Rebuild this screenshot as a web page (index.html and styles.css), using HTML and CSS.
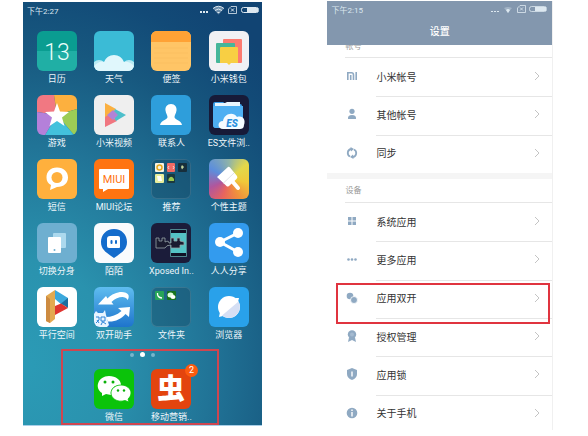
FILE: index.html
```html
<!DOCTYPE html>
<html lang="zh-CN">
<head>
  <meta charset="UTF-8">
  <meta name="viewport" content="width=device-width, initial-scale=1.0">
  <title>应用双开</title>
  <link rel="stylesheet" href="styles.css">
</head>
<body>
  <!-- 桌面 -->
  <main class="phone home">
    <div class="status">
      <span>下午2:27</span>
      <svg class="status-icons" width="64" height="12" viewBox="0 0 64 12">
        <g fill="currentColor">
          <rect x="3" y="7" width="2" height="2"/><rect x="6" y="7" width="2" height="2"/><rect x="9" y="7" width="2" height="2"/>
          <path d="M16 4.500Q21.500 0 27 4.500L21.500 10.500Z" opacity=".45"/>
        </g>
        <g fill="none" stroke="currentColor">
          <path d="M16 4.500Q21.500 0 27 4.500M18 6.500Q21.500 3.500 25 6.500M20.500 8.500H22.500"/>
          <path d="M34 2.500H39.500V9.500H31.500V5Z" opacity=".8"/><path d="M34 4.500L37 7.500M37 4.500L34 7.500"/>
          <rect x="44.500" y="3.500" width="17" height="5" rx="2"/>
        </g>
        <path d="M50 4H61V8H50Z" fill="currentColor"/>
      </svg>
    </div>

    <div class="apps">
      <a class="app" href="#">
        <svg class="icon" viewBox="0 0 40 40">
          <path fill="#0a9d91" d="M0 0H40V20H0Z"/><path fill="#20afa5" d="M0 20H40V40H0Z"/>
          <text x="20" y="29" class="day">13</text>
        </svg>
        <span>日历</span>
      </a>
      <a class="app" href="#">
        <svg class="icon" viewBox="0 0 40 40">
          <path fill="#3bbbd6" d="M0 0H40V40H0Z"/>
          <g fill="#b9ebf4"><circle cx="5" cy="36" r="7"/><circle cx="35" cy="36" r="7"/></g>
          <path fill="#e0f7fc" d="M0 35Q6 29 10 31Q13 24 20 24Q27 24 30 31Q35 30 40 35V40H0Z"/>
        </svg>
        <span>天气</span>
      </a>
      <a class="app" href="#">
        <svg class="icon" viewBox="0 0 40 40">
          <path fill="#ffc566" d="M0 0H40V40H0Z"/><path fill="#ffa235" d="M0 0H40V11H0Z"/>
          <path stroke="#f8bd60" stroke-width=".6" d="M3 17H37M3 22H37M3 27H37M3 32H37"/>
        </svg>
        <span>便签</span>
      </a>
      <a class="app" href="#">
        <svg class="icon" viewBox="0 0 40 40">
          <path fill="#f1f1f4" d="M0 0H40V40H0Z"/>
          <rect x="14" y="8" width="19" height="24" rx="1" fill="#fc7b70"/>
          <rect x="7" y="12" width="19" height="20" rx="1" fill="#45b69a"/>
          <path fill="#f8cf43" d="M11 17Q11 16 12 16H28Q29 16 29 17V32H22L20 34L18 32H11Z"/>
        </svg>
        <span>小米钱包</span>
      </a>

      <a class="app" href="#">
        <svg class="icon" viewBox="0 0 40 40">
          <path fill="#f17882" d="M0 0H17L20 20L0 17Z"/><path fill="#fcb03f" d="M17 0H40V14L20 20Z"/>
          <path fill="#9ccc55" d="M40 14V40H37L20 20Z"/><path fill="#43c1dc" d="M37 40H8L20 20Z"/>
          <path fill="#b480da" d="M8 40H0V17L20 20Z"/>
          <path fill="#fff" d="M20 8L23 16.500L32 17L25 22.500L27.500 31L20 26L12.500 31L15 22.500L8 17L17 16.500Z"/>
        </svg>
        <span>游戏</span>
      </a>
      <a class="app" href="#">
        <svg class="icon" viewBox="0 0 40 40">
          <path fill="#efefef" d="M0 0H40V40H0Z"/>
          <path fill="#fbb040" d="M11 8L22 14L16 20L11 24Z"/><path fill="#f07680" d="M11 22L16 19L23 26L11 32Z"/>
          <path fill="#4dbfcb" d="M21 14L32 20L22 26L18 20Z"/><path fill="#b283d6" d="M13 20L19 15L24 20L19 25Z"/>
        </svg>
        <span>小米视频</span>
      </a>
      <a class="app" href="#">
        <svg class="icon" viewBox="0 0 40 40">
          <path fill="#2e9edb" d="M0 0H40V40H0Z"/>
          <path fill="#fff" d="M20 9C24 9 26 12 25.500 15.500C25 19 23.500 20 23.500 22C23.500 25 30 25 31 30H9C10 25 16.500 25 16.500 22C16.500 20 15 19 14.500 15.500C14 12 16 9 20 9Z"/>
        </svg>
        <span>联系人</span>
      </a>
      <a class="app" href="#">
        <svg class="icon" viewBox="0 0 40 40">
          <path fill="#171a38" d="M0 0H40V40H0Z"/>
          <path fill="#3d9fe8" d="M4 9Q4 7 6 7H14L17 9H31Q33 9 33 11V33H7Q4 33 4 30Z"/>
          <path fill="#e9f6ff" d="M6 8H16L18 7H31V11H6Z"/><path fill="#4eaff2" d="M4 11H34V31Q34 33 32 33H7Q4 33 4 30Z"/>
          <path fill="#f5fbff" d="M14 34C8 34 8 26 14 26C15 19 24 16 28 22C34 20 37 25 35 30C35 33 33 34 31 34Z"/>
          <text x="23" y="32" class="es">ES</text>
        </svg>
        <span>ES文件浏..</span>
      </a>

      <a class="app" href="#">
        <svg class="icon" viewBox="0 0 40 40">
          <path fill="#ffb03d" d="M0 0H40V40H0Z"/>
          <path fill="#fff" d="M20 8.500C27 8.500 31 13 31 18.500C31 24 27 28 20 28L13 31L14 26C11 24.500 9.500 22 9.500 18.500C9.500 13 13 8.500 20 8.500Z"/>
          <circle cx="20" cy="18.500" r="5.500" fill="#ffb03d"/>
        </svg>
        <span>短信</span>
      </a>
      <a class="app" href="#">
        <svg class="icon" viewBox="0 0 40 40">
          <path fill="#ff7411" d="M0 0H40V40H0Z"/>
          <path fill="#fff" d="M6 10H34Q35 10 35 11V29Q35 30 34 30H14L9 33V30H6Q5 30 5 29V11Q5 10 6 10Z"/>
          <text x="20" y="24" class="miui">MIUI</text>
        </svg>
        <span>MIUI论坛</span>
      </a>
      <a class="app" href="#">
        <svg class="icon folder" viewBox="0 0 40 40">
          <rect x="4" y="4" width="9" height="9" rx="1" fill="#f8f3e4"/><circle cx="8.500" cy="8.500" r="2.500" fill="none" stroke="#e5a820" stroke-width="1.500"/>
          <rect x="16" y="4" width="8" height="9" rx="1" fill="#f26a64"/><path d="M18 7L17 8.500L18 10M22 7L23 8.500L22 10" fill="none" stroke="#fff" stroke-width=".7"/>
          <rect x="27" y="4" width="9" height="9" rx="1" fill="#172e3b"/><path fill="#c2d6a0" d="M31 6L33 8L31 10.500L30 8Z"/>
          <rect x="4" y="15" width="9" height="9" rx="1" fill="#e9ee9d"/><path fill="#fff" d="M6 17H10L11 22H7Z"/>
          <rect x="16" y="15" width="8" height="9" rx="1" fill="#1b393f"/><path fill="#9bc94e" d="M17.500 20Q20 15.500 23 20V22H17.500Z"/>
        </svg>
        <span>推荐</span>
      </a>
      <a class="app" href="#">
        <svg class="icon theme" viewBox="0 0 40 40">
          <path fill="#fff" d="M8 18L19 8Q20 7.500 21 8.500L28 17Q29 18.500 27.500 20L20 27Q18.500 28 17.500 27Z"/>
          <path stroke="#fff" stroke-width="4" stroke-linecap="round" d="M23 22L29 29"/>
          <path stroke="#d4d5dd" stroke-width=".7" d="M14 24.500L25 14"/>
        </svg>
        <span>个性主题</span>
      </a>

      <a class="app" href="#">
        <svg class="icon" viewBox="0 0 40 40">
          <path fill="#6eafd0" d="M0 0H40V40H0Z"/>
          <rect x="16" y="10" width="13" height="15" rx="1" fill="#acd9ee"/>
          <rect x="11" y="14" width="13" height="16" rx="1" fill="#fff"/><circle cx="17.500" cy="27" r="1" fill="#6eafd0"/>
        </svg>
        <span>切换分身</span>
      </a>
      <a class="app" href="#">
        <svg class="icon" viewBox="0 0 40 40">
          <path fill="#f9fbfd" d="M0 0H40V40H0Z"/>
          <path fill="#146ccc" d="M20 6C28 6 33 12 33 19C33 27 27 30 20 35C13 30 7 27 7 19C7 12 12 6 20 6Z"/>
          <path fill="#fff" d="M16 13H24Q26 13 26 15V24Q26 25 25 25H15Q13 25 13 23V16Q13 13 16 13Z"/>
          <path stroke="#146ccc" stroke-width="2" stroke-linecap="round" d="M17.500 18V20M22 18V20"/>
        </svg>
        <span>陌陌</span>
      </a>
      <a class="app" href="#">
        <svg class="icon" viewBox="0 0 40 40">
          <path fill="#1b1c3a" d="M0 0H40V40H0Z"/>
          <path fill="#101125" stroke="#5ea4a8" stroke-width=".8" d="M19.500 6.500H35.500V33.500H19.500Z"/><path fill="#54c3c6" d="M20 10H35V30H20Z"/>
          <path fill="#1a1b30" stroke="#97a5a7" stroke-width=".8" d="M5 15H8V18H11V15H14V19Q18 17 18 20H20V15H23V18H26V15H29V18L33 19V22L29 22V25H20V22Q15 22 14 25H5Z"/>
        </svg>
        <span>Xposed In..</span>
      </a>
      <a class="app" href="#">
        <svg class="icon" viewBox="0 0 40 40">
          <path fill="#339bee" d="M0 0H40V40H0Z"/>
          <path fill="none" stroke="#fff" stroke-width="3" d="M29 10L11 19L29 29"/>
          <g fill="#fff"><circle cx="29" cy="10" r="5"/><circle cx="11" cy="19" r="5"/><circle cx="29" cy="29" r="5"/></g>
        </svg>
        <span>人人分享</span>
      </a>

      <a class="app" href="#">
        <svg class="icon" viewBox="0 0 40 40">
          <path fill="#fff" d="M0 0H40V40H0Z"/>
          <path fill="#3ba8dc" d="M18 3L31 11V15L25 18L18 12Z"/><path fill="#1d6e9f" d="M31 11V21L24 16.500Z"/>
          <path fill="#df3430" d="M18 19L24 16.500L31 21L18 28Z"/>
          <path fill="#e3a950" d="M9 9L18 3V32L13 36L9 34Z"/><path fill="#cd8b41" d="M9 9L13 12V36L9 34Z"/>
        </svg>
        <span>平行空间</span>
      </a>
      <a class="app" href="#">
        <svg class="icon assist" viewBox="0 0 40 40">
          <path fill="#fff" d="M4 17.500L12 9L13.500 11.500C20 4 32 3 34.500 8C35 10 34.500 12 33.500 13C31 8 23 10 17.500 15L19.500 17.500Z"/>
          <path fill="#fff" d="M36 20L24 21L27.500 24C23 28 17 30 12 30L14 34.500C21 35 27 32 31.500 27L35 30Z"/>
          <path fill="#e8f5ff" d="M0 27L2 24L4 26H9L11 23L12 28L15 38L13 40H0Z"/>
          <path fill="none" stroke="#2c83d8" d="M2 30H5V33L2 36M5 36L3 33M7 30H11V34H7ZM9 34L7 38M9 35L12 37"/>
        </svg>
        <span>双开助手</span>
      </a>
      <a class="app" href="#">
        <svg class="icon folder" viewBox="0 0 40 40">
          <rect x="4" y="4" width="9" height="9" rx="1" fill="#27a458"/><path fill="none" stroke="#fff" stroke-width="1.300" d="M6.500 6Q6 10.500 11 11"/>
          <rect x="16" y="4" width="9" height="9" rx="1" fill="#18731e"/><ellipse cx="19.500" cy="8" rx="3" ry="2.500" fill="#e0ffd9"/><ellipse cx="22" cy="10" rx="2.500" ry="2" fill="#fff"/>
        </svg>
        <span>文件夹</span>
      </a>
      <a class="app" href="#">
        <svg class="icon" viewBox="0 0 40 40">
          <path fill="#29a1ea" d="M0 0H40V40H0Z"/>
          <circle cx="20" cy="20" r="11" fill="#fff"/><path fill="#fff" d="M26 11L30 11L29 15ZM14 29L10 30L11 25Z"/>
          <path fill="#d5dff4" d="M29.500 14.500A11 11 0 0 1 13 28.500Z"/>
        </svg>
        <span>浏览器</span>
      </a>
    </div>

    <div class="dots"><i></i><i class="on"></i><i></i></div>

    <div class="dock">
      <a class="app" href="#">
        <svg class="icon" viewBox="0 0 40 40">
          <path fill="#0bc30a" d="M0 0H40V40H0Z"/>
          <path fill="#fff" d="M15 7C22 7 27 11 27 16C20 16 16 20 17 26L12 25L8 27V24C0 19 4 7 15 7Z"/>
          <path fill="#fff" d="M27 16C33 16 37 20 37 24C37 27 35 29 34 30L35 33L31 31.500C23 34 17 29 17 24C17 20 21 16 27 16Z" stroke="#0bc30a" stroke-width=".8"/>
          <g fill="#0bb00a"><circle cx="11" cy="13" r="1.500"/><circle cx="19" cy="13" r="1.500"/><circle cx="24" cy="21.500" r="1.200"/><circle cx="30" cy="21.500" r="1.200"/></g>
        </svg>
        <span>微信</span>
      </a>
      <a class="app" href="#">
        <svg class="icon" viewBox="0 0 40 40">
          <path fill="#e3440e" d="M0 0H40V40H0Z"/>
          <text x="20" y="30" class="bug">虫</text>
        </svg>
        <b class="badge">2</b>
        <span>移动营销..</span>
      </a>
    </div>
    <div class="mark dock-mark"></div>
  </main>

  <!-- 设置 -->
  <section class="phone settings">
    <header>
      <div class="status">
        <span>下午2:15</span>
        <svg class="status-icons" width="64" height="12" viewBox="0 0 64 12">
          <g fill="currentColor">
            <rect x="4" y="8" width="2" height="1"/><rect x="7" y="8" width="2" height="1"/><rect x="10" y="8" width="2" height="1"/>
            <path d="M17 5Q21 3 25 5L21 10Z" opacity=".35"/><path d="M19 7Q21 5 23 7L21 10Z"/>
          </g>
          <g fill="none" stroke="currentColor" stroke-width=".8">
            <path d="M33 2.500H38.500V9.500H30.500V5Z"/><path d="M33 4.500L36 7.500M36 4.500L33 7.500"/>
            <rect x="42.500" y="3.500" width="17" height="5" rx="2"/>
          </g>
          <path d="M48 4H59V8H48Z" fill="currentColor"/>
        </svg>
      </div>
      <h1>设置</h1>
    </header>

    <h2 class="cut">帐号</h2>
    <ul class="account">
      <li><a href="#">
        <svg class="glyph" viewBox="0 0 12 12"><path fill="none" stroke="currentColor" stroke-width="1.600" d="M1.800 10V2.800H5.500Q7.500 2.800 7.500 5V10M4.700 5V10M10.200 2V10"/></svg>
        <span>小米帐号</span><svg class="arrow" viewBox="0 0 6 10"><path d="M1 1L5 5L1 9"/></svg></a></li>
      <li><a href="#">
        <svg class="glyph" viewBox="0 0 12 12"><circle cx="6" cy="3.300" r="2.600"/><path d="M2 11Q1.500 7 6 7Q10.500 7 10 11Z"/></svg>
        <span>其他帐号</span><svg class="arrow" viewBox="0 0 6 10"><path d="M1 1L5 5L1 9"/></svg></a></li>
      <li><a href="#">
        <svg class="glyph" viewBox="0 0 12 12"><path fill="none" stroke="currentColor" stroke-width="1.800" d="M4 9.500A4 4 0 0 1 5 2M8 2.500A4 4 0 0 1 7 10"/><path d="M4.500 0L8 2L5 4.500ZM7.500 12L4 10L7 7.500Z"/></svg>
        <span>同步</span><svg class="arrow" viewBox="0 0 6 10"><path d="M1 1L5 5L1 9"/></svg></a></li>
    </ul>

    <h2 class="group">设备</h2>
    <ul class="device">
      <li><a href="#">
        <svg class="glyph" viewBox="0 0 12 12"><path d="M2 2H5.500V5.500H2ZM6.500 2H10V5.500H6.500ZM2 6.500H5.500V10H2ZM6.500 6.500H10V10H6.500Z"/></svg>
        <span>系统应用</span><svg class="arrow" viewBox="0 0 6 10"><path d="M1 1L5 5L1 9"/></svg></a></li>
      <li><a href="#">
        <svg class="glyph" viewBox="0 0 12 12"><circle cx="2.500" cy="6.500" r="1.300"/><circle cx="6" cy="6.500" r="1.300"/><circle cx="9.500" cy="6.500" r="1.300"/></svg>
        <span>更多应用</span><svg class="arrow" viewBox="0 0 6 10"><path d="M1 1L5 5L1 9"/></svg></a></li>
      <li class="current"><a href="#">
        <svg class="glyph" viewBox="0 0 12 12"><circle cx="4" cy="4" r="3.300"/><circle cx="8" cy="8" r="3.500" stroke="#fff" stroke-width=".8"/></svg>
        <span>应用双开</span><svg class="arrow" viewBox="0 0 6 10"><path d="M1 1L5 5L1 9"/></svg></a>
        <div class="mark"></div></li>
      <li><a href="#">
        <svg class="glyph" viewBox="0 0 12 12"><circle cx="6" cy="4.500" r="4.200"/><circle cx="6" cy="4.500" r="2" fill="#a4bad0"/><path d="M3 7.500L2 12L6 10L10 12L9 7.500Z"/></svg>
        <span>授权管理</span><svg class="arrow" viewBox="0 0 6 10"><path d="M1 1L5 5L1 9"/></svg></a></li>
      <li><a href="#">
        <svg class="glyph" viewBox="0 0 12 12"><path d="M6 0L11 2V6Q11 10 6 12Q1 10 1 6V2Z"/><path fill="#fff" d="M5.300 3.500H6.700V8.500H5.300Z"/></svg>
        <span>应用锁</span><svg class="arrow" viewBox="0 0 6 10"><path d="M1 1L5 5L1 9"/></svg></a></li>
      <li><a href="#">
        <svg class="glyph" viewBox="0 0 12 12"><circle cx="6" cy="6" r="5.300"/><path fill="#fff" d="M5.300 2.500H6.700V4H5.300ZM5.300 5H6.700V9.500H5.300Z"/></svg>
        <span>关于手机</span><svg class="arrow" viewBox="0 0 6 10"><path d="M1 1L5 5L1 9"/></svg></a></li>
    </ul>
  </section>
</body>
</html>
```
FILE: styles.css
```css
:root {
  --color-header: #8397ae;
  --color-glyph: #8fa9c2;
  --color-line: #e6e6e6;
  --color-mark: #e0343f;
}

* {
  margin: 0;
  padding: 0;
  box-sizing: border-box;
}

body {
  display: flex;
  gap: 65px;
  min-height: 100vh;
  padding: 1px 35px 6px 23px;
  background: #fff;
  font-family: Roboto, "Noto Sans CJK SC", sans-serif;
}

a {
  color: inherit;
  text-decoration: none;
}

ul {
  list-style: none;
}

.phone {
  position: relative;
  display: flex;
  flex-direction: column;
}

.status {
  display: flex;
  justify-content: space-between;
  align-items: center;
  height: 16px;
  padding: 0 1px 0 4px;
  font-size: 8px;
  color: #dde8f0;
}

.status-icons {
  display: block;
}

.mark {
  position: absolute;
  border: 2px solid var(--color-mark);
  pointer-events: none;
}

/* home */
.home {
  flex: 240 1 0;
  align-self: flex-start;
  margin-top: 1px;
  padding-bottom: 1px;
  border-bottom: 1px solid #a9cfe8;
  background: radial-gradient(ellipse 150% 100% at 0% 86%, #2b9bb6 0%, #2a92ae 25%, #217497 52%, #17587f 75%, #124a77 90%, #114473 100%);
}

.apps,
.dock {
  display: grid;
  grid-template-columns: repeat(4, 1fr);
  row-gap: 9px;
  padding: 0 5px;
}

.apps {
  margin-top: 13px;
}

.app {
  position: relative;
  display: flex;
  flex-direction: column;
  align-items: center;
  gap: 2px;
  color: #eef6fa;
  font-size: 9px;
  line-height: 13px;
  white-space: nowrap;
}

.icon {
  width: 40px;
  height: 40px;
  border-radius: 6px;
}

.icon text {
  text-anchor: middle;
}

.day {
  fill: #e9fffb;
  font-size: 23px;
  font-weight: 300;
}

.es {
  fill: #2a8fdd;
  font-size: 10px;
  font-style: italic;
  font-weight: 900;
}

.miui {
  fill: #ff7411;
  font-size: 11px;
}

.bug {
  fill: #fff;
  font-family: "Noto Sans CJK SC", sans-serif;
  font-size: 28px;
  font-weight: 900;
}

.folder {
  background: rgba(20, 60, 85, 0.35);
  box-shadow: inset 0 0 0 1px rgba(255, 255, 255, 0.12);
}

.theme {
  background: conic-gradient(#8fb3a8, #e3d84a 50deg, #f0c93a 100deg, #f0913c 150deg, #e8645e 200deg, #b0569d 245deg, #5c8edc 300deg, #8fb3a8);
}

.assist {
  background: linear-gradient(#5fbdf0, #1e74cc);
}

.dots {
  display: flex;
  justify-content: center;
  align-items: center;
  gap: 6px;
  height: 5px;
  margin: 10px 0 12px;
}

.dots i {
  width: 4px;
  height: 4px;
  border-radius: 50%;
  background: #78b5cc;
}

.dots .on {
  width: 5px;
  height: 5px;
  background: #fff;
}

.dock .app:first-child {
  grid-column-start: 2;
}

.badge {
  position: absolute;
  top: -5px;
  right: 2px;
  width: 13px;
  border-radius: 50%;
  background: #fb5a0e;
  color: #fff;
  font-weight: 400;
  text-align: center;
}

.dock-mark {
  bottom: 0;
  left: 16%;
  right: 18%;
  height: 76px;
  border-color: #cf4650;
}

/* settings */
.settings {
  flex: 225 1 0;
  overflow: hidden;
  border-right: 1px solid #f0f0f0;
  color: #333;
}

.settings header {
  height: 44px;
  background: var(--color-header);
}

.settings h1 {
  color: #fff;
  font-size: 10px;
  font-weight: 500;
  line-height: 30px;
  text-align: center;
}

.settings h2 {
  margin-left: 18px;
  border-bottom: 1px solid var(--color-line);
  color: #999;
  font-size: 8px;
  font-weight: 400;
}

.settings .cut {
  height: 13px;
  overflow: hidden;
  line-height: 4px;
}

.settings .group {
  height: 24px;
  line-height: 23px;
}

.settings ul {
  display: flex;
  flex-direction: column;
}

.account {
  flex: 3 1 0;
  border-bottom: 6px solid #f5f5f5;
}

.device {
  flex: 6 1 0;
  margin-bottom: -3px;
}

.settings li {
  position: relative;
  flex: 1;
  display: flex;
  min-height: 36px;
}

.settings li a {
  flex: 1;
  display: grid;
  grid-template-columns: 12px 1fr 6px;
  column-gap: 18px;
  align-items: center;
  padding: 0 12px 2px 19px;
  font-size: 10px;
}

.settings li + li::before {
  content: '';
  position: absolute;
  top: 0;
  left: 49px;
  right: 0;
  height: 1px;
  background: var(--color-line);
}

.glyph {
  width: 12px;
  height: 12px;
  color: var(--color-glyph);
  fill: currentColor;
}

.arrow {
  width: 6px;
  height: 10px;
  fill: none;
  stroke: #c4c4c4;
}

.current .mark {
  top: 3px;
  right: 2px;
  bottom: -6px;
  left: 9px;
  z-index: 1;
}
```
